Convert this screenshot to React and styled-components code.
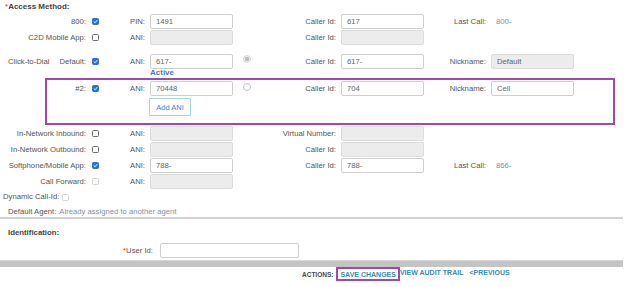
import React from 'react';
import styled, { createGlobalStyle } from 'styled-components';

const GlobalStyle = createGlobalStyle`
  body {
    margin: 0;
    background: #fff;
    font-family: 'Liberation Sans', Arial, sans-serif;
    font-size: 7.7px;
    color: #555;
  }
`;

const Page = styled.div`
  width: 623px;
`;

const SectionTitle = styled.div`
  height: 13px;
  line-height: 14px;
  padding-left: 5px;
  font-weight: bold;
  font-size: 8px;
  color: #444;
  span {
    color: #e03030;
    font-weight: normal;
  }
`;

const Row = styled.div`
  display: grid;
  grid-template-columns: ${p => 86 - (p.$inset || 0)}px 13px 46px 88px 29px 74px 88px 62px 88px;
  align-items: center;
  height: ${p => p.$h || 16}px;
  margin-top: ${p => p.$mt || 0}px;
`;

const Label = styled.div`
  text-align: right;
  white-space: nowrap;
`;

const SplitLabel = styled.div`
  display: flex;
  justify-content: space-between;
  padding-left: 8px;
  white-space: nowrap;
`;

const Cell = styled.div`
  padding-left: ${p => p.$pl ?? 5}px;
  display: flex;
  align-items: center;
`;

const CheckCell = styled.div`
  padding-left: 6px;
  display: flex;
  align-items: center;
`;

const Box = styled.span`
  width: 7px;
  height: 7px;
  box-sizing: border-box;
  border-radius: 1.5px;
  display: inline-flex;
  align-items: center;
  justify-content: center;
  background: ${p => (p.$checked ? '#2b6fd8' : '#fff')};
  border: 1px solid ${p => (p.$checked ? '#2b6fd8' : p.$disabled ? '#d4d4d4' : '#6a6a6a')};
`;

const Check = ({ checked, disabled }) => (
  <Box $checked={checked} $disabled={disabled}>
    {checked && (
      <svg width="5" height="5" viewBox="0 0 10 10">
        <path d="M1.5 5.2 L4 7.6 L8.6 2.4" fill="none" stroke="#fff" strokeWidth="2" />
      </svg>
    )}
  </Box>
);

const Radio = styled.span`
  width: 8px;
  height: 8px;
  box-sizing: border-box;
  border-radius: 50%;
  border: 1px solid ${p => (p.$checked ? '#d8d8d8' : '#c4c4c4')};
  background: ${p => (p.$checked ? 'radial-gradient(circle, #bdbdbd 0 2px, #f2f2f2 2.5px)' : '#fff')};
  margin-left: 10px;
  margin-top: ${p => p.$up || 0}px;
`;

const Field = styled.input`
  width: ${p => p.$w || 83}px;
  height: 15px;
  box-sizing: border-box;
  border: 1px solid ${p => (p.disabled ? '#dcdcdc' : '#cfcfcf')};
  border-radius: 2px;
  background: ${p => (p.disabled ? '#ececec' : '#fff')};
  padding: 0 5px;
  font-family: 'Liberation Sans', Arial, sans-serif;
  font-size: 7.7px;
  color: #666;
  outline: none;
`;

const Value = styled.div`
  padding-left: 10px;
  color: #7d91a6;
  white-space: nowrap;
`;

const ActiveTag = styled.div`
  padding-left: 5px;
  color: #3d78dc;
  font-weight: bold;
  font-size: 8px;
  line-height: 8px;
  margin-top: -1px;
`;

const Highlight = styled.div`
  margin-left: 45px;
  width: 570px;
  box-sizing: border-box;
  border: 2px solid #9d4aa9;
  padding-bottom: 7px;
`;

const AddButton = styled.button`
  width: 42px;
  height: 18px;
  margin-left: -1px;
  border: 1px solid #a9d5de;
  border-radius: 1px;
  background: #fff;
  color: #4a82d6;
  font-family: 'Liberation Sans', Arial, sans-serif;
  font-size: 7.5px;
  padding: 0;
`;

const Line = styled.div`
  height: ${p => p.$h}px;
  line-height: ${p => p.$h}px;
  margin-top: ${p => p.$mt || 0}px;
  padding-left: ${p => p.$pl}px;
  display: flex;
  align-items: center;
  gap: 3px;
  white-space: nowrap;
`;

const Muted = styled.span`
  color: #7d93a8;
`;

const Divider = styled.div`
  height: 2px;
  background: #d2d2d2;
`;

const SubTitle = styled.div`
  padding: 9px 0 0 8px;
  height: 10px;
  line-height: 10px;
  font-weight: bold;
  font-size: 7.8px;
  color: #444;
`;

const UserRow = styled.div`
  display: grid;
  grid-template-columns: 153px 139px;
  column-gap: 7px;
  align-items: center;
  height: 16px;
  margin-top: 4px;
  span {
    color: #e03030;
  }
`;

const Bar = styled.div`
  height: 7px;
  margin-top: 2px;
  background: #c4c4c4;
  border-top: 1px solid #d6d6d6;
  box-sizing: border-box;
`;

const Actions = styled.div`
  display: flex;
  align-items: center;
  height: 14px;
  padding-left: 302px;
  font-weight: bold;
`;

const ActionsLabel = styled.span`
  color: #4a4a4a;
  font-size: 6.5px;
  margin-right: 3px;
`;

const ActionLink = styled.a`
  color: #3a8bb6;
  text-decoration: none;
  font-size: 7px;
  white-space: nowrap;
  height: 14px;
  line-height: 11px;
  box-sizing: border-box;
  padding: 0 ${p => (p.$boxed ? 2 : 0)}px;
  margin-right: ${p => p.$mr || 0}px;
  border: ${p => (p.$boxed ? '2px solid #9d4aa9' : 'none')};
`;

const MethodRow = ({ label, checked, disabled, ani, aniDisabled, midLabel = 'Caller Id:', mid, midDisabled, noMid, thirdLabel, third }) => (
  <Row>
    <Label>{label}</Label>
    <CheckCell><Check checked={checked} disabled={disabled} /></CheckCell>
    <Label>ANI:</Label>
    <Cell><Field defaultValue={ani} disabled={aniDisabled} readOnly /></Cell>
    <div />
    <Label>{noMid ? '' : midLabel}</Label>
    <Cell>{!noMid && <Field defaultValue={mid} disabled={midDisabled} readOnly />}</Cell>
    <Label>{thirdLabel}</Label>
    <Value>{third}</Value>
  </Row>
);

export default function App() {
  return (
    <Page>
      <GlobalStyle />
      <SectionTitle><span>*</span>Access Method:</SectionTitle>

      <Row>
        <Label>800:</Label>
        <CheckCell><Check checked /></CheckCell>
        <Label>PIN:</Label>
        <Cell><Field defaultValue="1491" readOnly /></Cell>
        <div />
        <Label>Caller Id:</Label>
        <Cell><Field defaultValue="617" readOnly /></Cell>
        <Label>Last Call:</Label>
        <Value>800-</Value>
      </Row>
      <MethodRow label="C2D Mobile App:" aniDisabled midDisabled />

      <Row $mt={8}>
        <SplitLabel><span>Click-to-Dial</span><span>Default:</span></SplitLabel>
        <CheckCell><Check checked /></CheckCell>
        <Label>ANI:</Label>
        <Cell><Field defaultValue="617-" readOnly /></Cell>
        <Cell $pl={0}><Radio $checked $up={-4} /></Cell>
        <Label>Caller Id:</Label>
        <Cell><Field defaultValue="617-" readOnly /></Cell>
        <Label>Nickname:</Label>
        <Cell><Field defaultValue="Default" disabled readOnly /></Cell>
      </Row>
      <Row $h={9}>
        <div /><div /><div />
        <ActiveTag>Active</ActiveTag>
      </Row>

      <Highlight>
        <Row $inset={47}>
          <Label>#2:</Label>
          <CheckCell><Check checked /></CheckCell>
          <Label>ANI:</Label>
          <Cell><Field defaultValue="70448" readOnly /></Cell>
          <Cell $pl={0}><Radio $up={-2} /></Cell>
          <Label>Caller Id:</Label>
          <Cell><Field defaultValue="704" readOnly /></Cell>
          <Label>Nickname:</Label>
          <Cell><Field defaultValue="Cell" readOnly /></Cell>
        </Row>
        <Row $inset={47} $h={18} $mt={2}>
          <div /><div /><div />
          <Cell><AddButton>Add ANI</AddButton></Cell>
        </Row>
      </Highlight>

      <MethodRow label="In-Network Inbound:" aniDisabled midLabel="Virtual Number:" midDisabled />
      <MethodRow label="In-Network Outbound:" aniDisabled midDisabled />
      <MethodRow label="Softphone/Mobile App:" checked ani="788-" mid="788-" thirdLabel="Last Call:" third="866-" />
      <MethodRow label="Call Forward:" disabled aniDisabled noMid />

      <Line $h={12} $mt={2} $pl={3}>
        Dynamic Call-Id: <Check disabled />
      </Line>
      <Line $h={10} $mt={4} $pl={8}>
        Default Agent: <Muted>Already assigned to another agent</Muted>
      </Line>
      <Divider />

      <SubTitle>Identification:</SubTitle>
      <UserRow>
        <Label><span>*</span>User Id:</Label>
        <Field $w={139} readOnly />
      </UserRow>
      <Bar />

      <Actions>
        <ActionsLabel>ACTIONS:</ActionsLabel>
        <ActionLink $boxed>SAVE CHANGES</ActionLink>
        <ActionLink $mr={6}>VIEW AUDIT TRAIL</ActionLink>
        <ActionLink>&lt;PREVIOUS</ActionLink>
      </Actions>
    </Page>
  );
}
